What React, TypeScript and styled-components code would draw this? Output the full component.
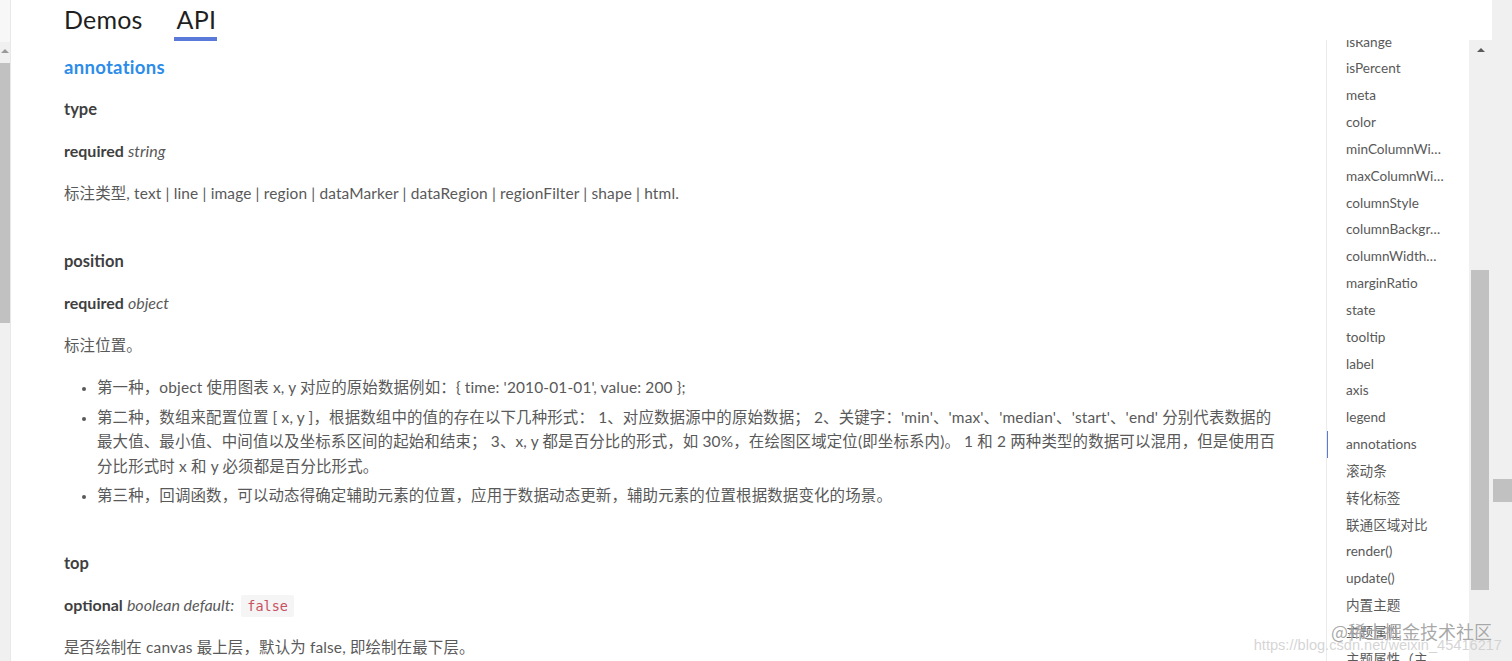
import React from "react";
import styled, { createGlobalStyle } from "styled-components";

const GlobalStyle = createGlobalStyle`
  html, body { margin: 0; padding: 0; background: #ffffff; }
  body { font-family: Lato, "Noto Sans CJK SC", sans-serif; }
  * { box-sizing: border-box; }
`;

const Frame = styled.div`
  position: relative;
  width: 1512px;
  height: 661px;
  display: flex;
  overflow: hidden;
  background: #ffffff;
`;

/* ---------- outer scrollbar remnants ---------- */
const LeftRail = styled.div`
  width: 11px;
  flex: none;
  display: flex;
  flex-direction: column;
  background: #f0f0f0;
  border-right: 1px solid #e8e8e8;
`;

const RailCap = styled.div`
  height: 42px;
  background: #f7f7f7;
`;

const UpArrow = styled.div<{ $offset: number }>`
  width: 0;
  height: 0;
  margin-top: ${(p) => p.$offset}px;
  align-self: center;
  border-left: 4px solid transparent;
  border-right: 4px solid transparent;
  border-bottom: 4px solid #5a5a5a;
`;

const LeftArrow = styled(UpArrow)`
  align-self: flex-start;
  margin-left: 1px;
  border-bottom-color: #9a9a9a;
`;

const Thumb = styled.div<{ $top: number; $height: number; $width: number; $left: number }>`
  margin-top: ${(p) => p.$top}px;
  margin-left: ${(p) => p.$left}px;
  width: ${(p) => p.$width}px;
  height: ${(p) => p.$height}px;
  flex: none;
  background: #c1c1c1;
`;

const RightRail = styled.div`
  width: 20px;
  flex: none;
  display: flex;
  flex-direction: column;
  background: #f0f0f0;
`;

/* ---------- main area ---------- */
const Main = styled.div`
  flex: 1;
  min-width: 0;
  display: flex;
  flex-direction: column;
`;

const Header = styled.header`
  height: 40px;
  flex: none;
  display: flex;
  align-items: stretch;
  gap: 34px;
  padding-left: 53px;
  background: #ffffff;
`;

const Tab = styled.div<{ $active?: boolean }>`
  position: relative;
  display: flex;
  align-items: center;
  padding-bottom: 2px;
  font-size: 25px;
  color: #1f1f1f;
  letter-spacing: 0.2px;
  &::after {
    content: "";
    display: ${(p) => (p.$active ? "block" : "none")};
    position: absolute;
    left: -3px;
    right: -1px;
    bottom: -1px;
    height: 4px;
    background: #5a79d9;
  }
`;

const Body = styled.div`
  flex: 1;
  min-height: 0;
  display: flex;
`;

const Content = styled.main`
  flex: 1;
  min-width: 0;
  overflow: hidden;
  padding: 14px 44px 0 53px;
`;

const SectionTitle = styled.h3`
  margin: 0 0 16px;
  font-size: 18.5px;
  line-height: 26px;
  font-weight: 700;
  color: #2d8ce8;
  letter-spacing: 0.3px;
`;

const Prop = styled.section`
  margin-bottom: 42px;
`;

const PropName = styled.h4`
  margin: 0 0 16px;
  font-size: 16.5px;
  line-height: 26px;
  font-weight: 700;
  color: #3f3f3f;
`;

const Signature = styled.div`
  margin: 0 0 16px;
  font-size: 16px;
  line-height: 26px;
  color: #595959;
  strong {
    font-weight: 700;
    color: #3f3f3f;
  }
  em {
    font-style: italic;
    color: #595959;
  }
`;

const Code = styled.code`
  display: inline-block;
  margin-left: 7px;
  padding: 0 6px;
  line-height: 22px;
  font-family: "DejaVu Sans Mono", "Liberation Mono", monospace;
  font-size: 13.5px;
  color: #c9505f;
  background: #f5f5f5;
  border-radius: 2px;
`;

const Desc = styled.p`
  margin: 0;
  font-size: 15.45px;
  letter-spacing: 0.15px;
  line-height: 26px;
  color: #595959;
`;

const Bullets = styled.ul`
  margin: 17px 0 0;
  padding-left: 33px;
  font-size: 15.45px;
  letter-spacing: 0.15px;
  line-height: 24.5px;
  color: #595959;
`;

const Bullet = styled.li`
  margin-bottom: 5px;
  &:last-child {
    margin-bottom: 0;
  }
  &::marker {
    font-size: 13px;
  }
`;

/* ---------- right anchor list ---------- */
const Sidebar = styled.nav`
  width: 143px;
  flex: none;
  overflow: hidden;
  border-left: 1px solid #ebebeb;
`;

const AnchorList = styled.ul`
  list-style: none;
  margin: -11.4px 0 0;
  padding: 0;
`;

const Anchor = styled.li<{ $active?: boolean }>`
  position: relative;
  height: 26.83px;
  line-height: 26.83px;
  padding-left: 19px;
  width: 116.6px;
  white-space: nowrap;
  overflow: hidden;
  text-overflow: ellipsis;
  font-size: 13.6px;
  color: #595959;
  &::before {
    content: "";
    display: ${(p) => (p.$active ? "block" : "none")};
    position: absolute;
    left: -1px;
    top: 0;
    bottom: 0;
    width: 2px;
    background: #5a79d9;
  }
`;

const SideTrack = styled.div`
  width: 23px;
  flex: none;
  display: flex;
  flex-direction: column;
  background: #f0f0f0;
`;

/* ---------- watermark ---------- */
const Watermark = styled.div`
  position: absolute;
  right: 10px;
  bottom: 7px;
  display: flex;
  flex-direction: column;
  align-items: flex-end;
  pointer-events: none;
`;

const MarkBrand = styled.span`
  margin-right: 10px;
  font-family: "Noto Sans CJK SC", sans-serif;
  font-size: 18px;
  line-height: 22px;
  color: rgba(140, 140, 140, 0.75);
  text-shadow: 0 0 1px rgba(255, 255, 255, 0.9);
`;

const MarkUrl = styled.span`
  margin-top: -6px;
  font-family: "Liberation Sans", sans-serif;
  font-size: 14.6px;
  line-height: 18px;
  color: rgba(205, 205, 205, 0.85);
`;

const anchors = [
  "isRange",
  "isPercent",
  "meta",
  "color",
  "minColumnWidth",
  "maxColumnWidth",
  "columnStyle",
  "columnBackground",
  "columnWidthRatio",
  "marginRatio",
  "state",
  "tooltip",
  "label",
  "axis",
  "legend",
  "annotations",
  "滚动条",
  "转化标签",
  "联通区域对比",
  "render()",
  "update()",
  "内置主题",
  "主题属性",
  "主题属性（主题样式表）",
];

export default function App() {
  return (
    <>
      <GlobalStyle />
      <Frame>
        <LeftRail>
          <RailCap />
          <LeftArrow $offset={7} />
          <Thumb $top={10} $height={260} $width={10} $left={0} />
        </LeftRail>

        <Main>
          <Header>
            <Tab>Demos</Tab>
            <Tab $active>API</Tab>
          </Header>
          <Body>
            <Content>
              <SectionTitle>annotations</SectionTitle>

              <Prop>
                <PropName>type</PropName>
                <Signature>
                  <strong>required</strong> <em>string</em>
                </Signature>
                <Desc>
                  标注类型, text | line | image | region | dataMarker | dataRegion | regionFilter | shape | html.
                </Desc>
              </Prop>

              <Prop>
                <PropName>position</PropName>
                <Signature>
                  <strong>required</strong> <em>object</em>
                </Signature>
                <Desc>标注位置。</Desc>
                <Bullets>
                  <Bullet>第一种，object 使用图表 x, y 对应的原始数据例如：{"{ time: '2010-01-01', value: 200 };"}</Bullet>
                  <Bullet>
                    第二种，数组来配置位置 [ x, y ]，根据数组中的值的存在以下几种形式： 1、对应数据源中的原始数据； 2、关键字：'min'、'max'、'median'、'start'、'end' 分别代表数据的最大值、最小值、中间值以及坐标系区间的起始和结束； 3、x, y 都是百分比的形式，如 30%，在绘图区域定位(即坐标系内)。 1 和 2 两种类型的数据可以混用，但是使用百分比形式时 x 和 y 必须都是百分比形式。
                  </Bullet>
                  <Bullet>第三种，回调函数，可以动态得确定辅助元素的位置，应用于数据动态更新，辅助元素的位置根据数据变化的场景。</Bullet>
                </Bullets>
              </Prop>

              <Prop>
                <PropName>top</PropName>
                <Signature>
                  <strong>optional</strong> <em>boolean default:</em>
                  <Code>false</Code>
                </Signature>
                <Desc>是否绘制在 canvas 最上层，默认为 false, 即绘制在最下层。</Desc>
              </Prop>
            </Content>

            <Sidebar>
              <AnchorList>
                {anchors.map((a) => (
                  <Anchor key={a} $active={a === "annotations"}>
                    {a}
                  </Anchor>
                ))}
              </AnchorList>
            </Sidebar>

            <SideTrack>
              <UpArrow $offset={8} />
              <Thumb $top={218} $height={320} $width={18} $left={2} />
            </SideTrack>
          </Body>
        </Main>

        <RightRail>
          <Thumb $top={479} $height={23} $width={19} $left={1} />
        </RightRail>

        <Watermark>
          <MarkBrand>@稀土掘金技术社区</MarkBrand>
          <MarkUrl>https://blog.csdn.net/weixin_45416217</MarkUrl>
        </Watermark>
      </Frame>
    </>
  );
}
